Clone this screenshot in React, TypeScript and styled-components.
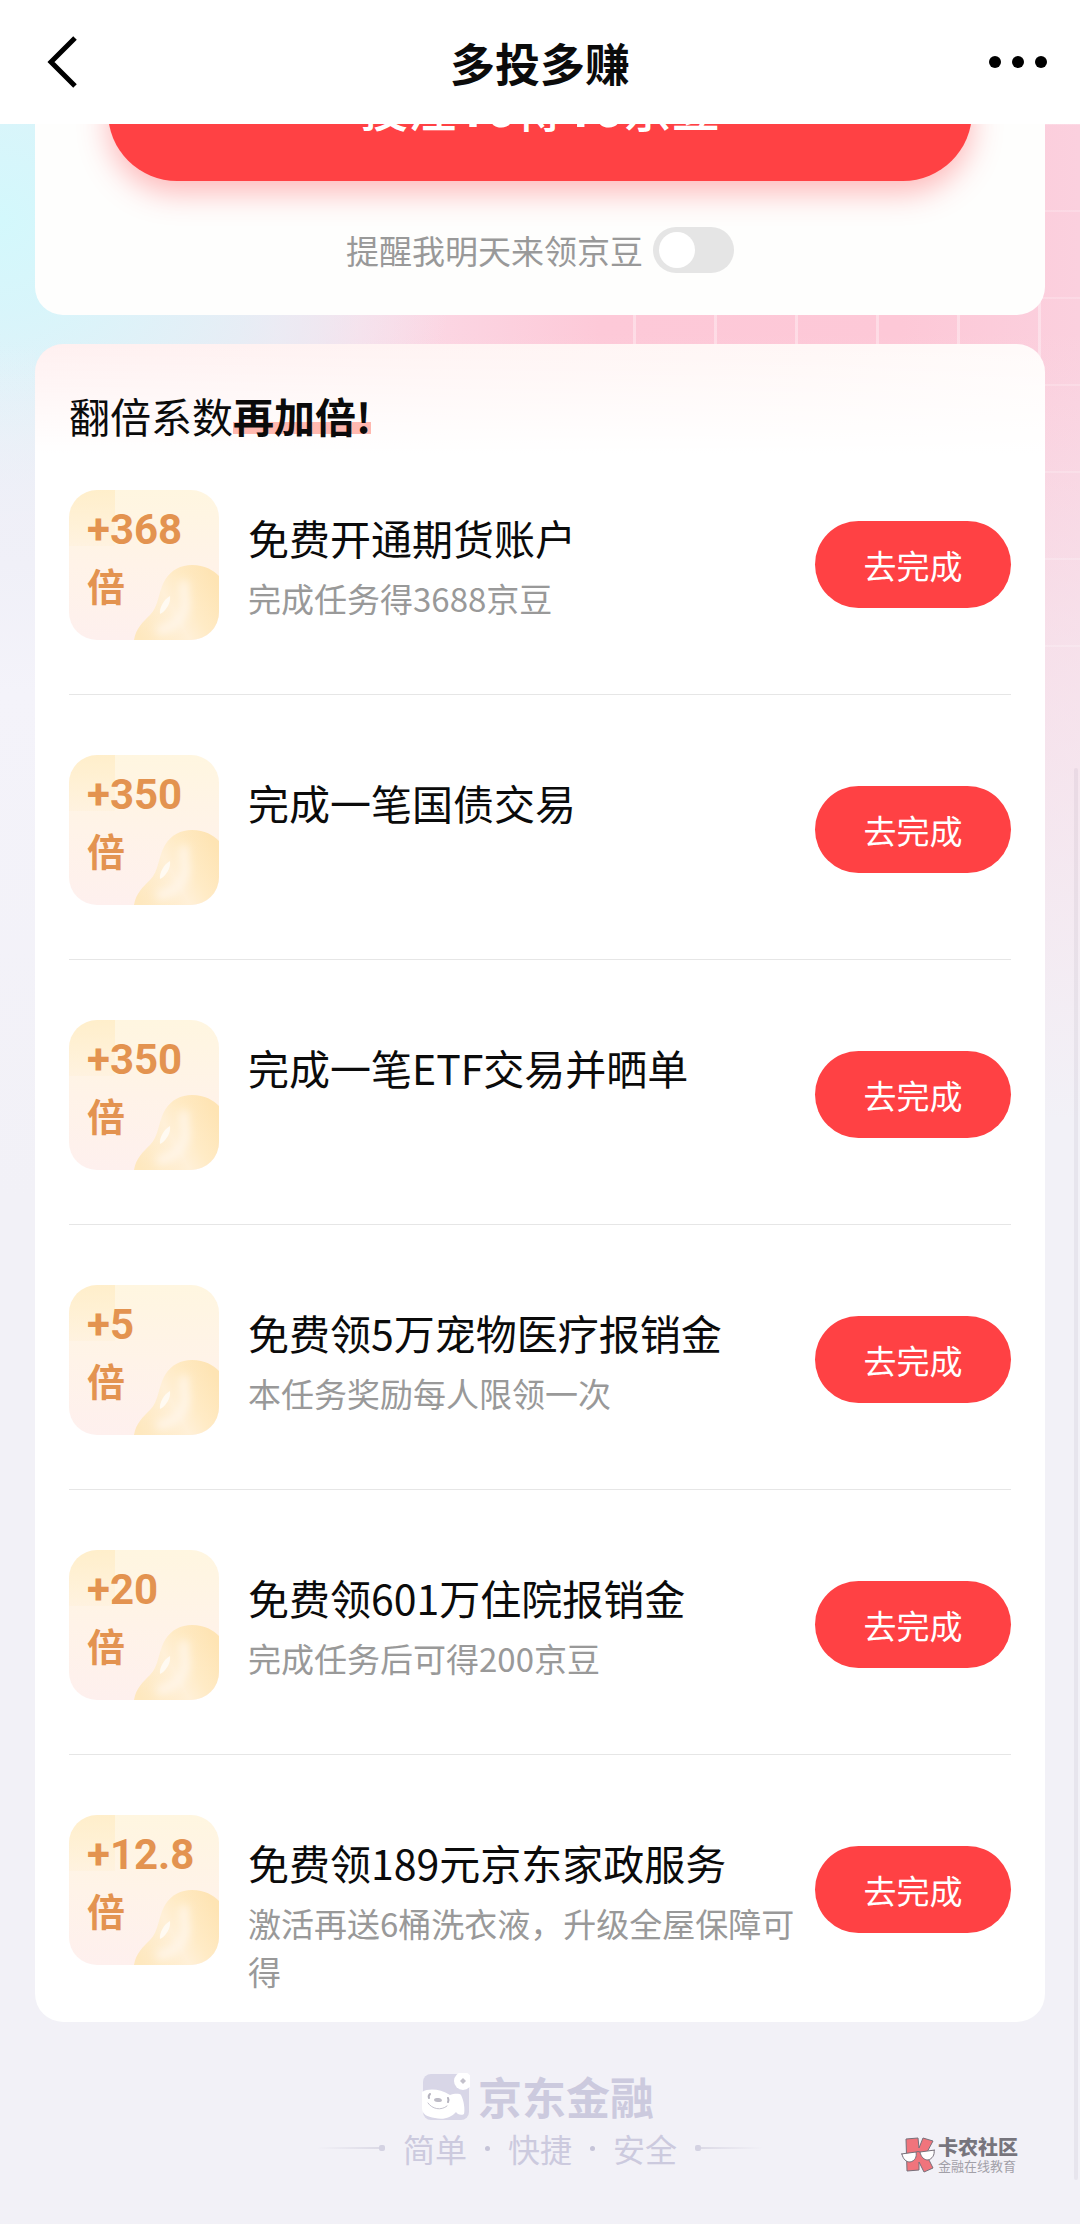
import React from "react";
import styled, { createGlobalStyle } from "styled-components";

const GlobalStyle = createGlobalStyle`
  *, *::before, *::after { box-sizing: border-box; }
  html { scrollbar-width: none; }
  body {
    margin: 0;
    background: #f2f1f7;
    color: #0b0b0b;
    font-family: "Noto Sans CJK SC", "Noto Sans", sans-serif;
  }
  button { font: inherit; border: 0; padding: 0; cursor: pointer; }
  h1, h2, h3, p, ul { margin: 0; padding: 0; font-weight: 400; }
`;

const Page = styled.div`
  position: relative;
  display: flex;
  flex-direction: column;
  min-height: 100vh;
`;

const Backdrop = styled.div`
  position: absolute;
  inset: 0 0 auto 0;
  height: 1200px;
  z-index: -1;
  background:
    linear-gradient(180deg, rgba(242, 241, 247, 0) 330px, rgba(242, 241, 247, 0.5) 640px, #f2f1f7 1120px),
    radial-gradient(ellipse 460px 460px at 0 220px, #d3f8fc 0, rgba(214, 246, 251, 0.9) 20%, rgba(234, 238, 246, 0.7) 65%, rgba(242, 241, 247, 0) 100%),
    linear-gradient(90deg, #e9edf6 0, #e9e6f0 240px, #fbdce8 360px, #fdc9d8 600px, #fdc8d7 900px, #fbd0de 100%);

  &::after {
    content: "";
    position: absolute;
    inset: 0 0 auto auto;
    width: 447px;
    height: 650px;
    background:
      repeating-linear-gradient(90deg, rgba(255, 255, 255, 0.35) 0 3px, transparent 3px 81px),
      repeating-linear-gradient(180deg, transparent 0 36px, rgba(255, 255, 255, 0.2) 36px 38px, transparent 38px 87px);
  }

  &::before {
    content: "";
    position: absolute;
    inset: 344px auto auto 0;
    width: 35px;
    height: 856px;
    background: linear-gradient(180deg, rgba(242, 241, 247, 0) 0, #f0f0f8 220px, #f4f3fa 350px, #f2f1f7 100%);
  }
`;

const Header = styled.header`
  position: sticky;
  top: 0;
  z-index: 2;
  display: grid;
  grid-template-columns: 80px 1fr 80px;
  align-items: center;
  height: 124px;
  padding: 0 24px;
  background: #fff;
`;

const Content = styled.main`
  padding: 0 35px;
  overflow: hidden;
`;

const IconButton = styled.button<{ $end?: boolean }>`
  display: flex;
  justify-content: ${(p) => (p.$end ? "flex-end" : "flex-start")};
  align-items: center;
  height: 80px;
  background: none;
  color: #000;
`;

const PageTitle = styled.h1`
  padding-top: 2px;
  text-align: center;
  font-size: 45px;
  line-height: 64px;
  font-weight: 700;
`;

const BetCard = styled.section`
  display: flex;
  flex-direction: column;
  gap: 46px;
  margin-top: -81px;
  padding: 0 73px 42px;
  border-radius: 0 0 28px 28px;
  background: #fefefd;
`;

const BetButton = styled.button`
  height: 138px;
  padding-bottom: 8px;
  border-radius: 69px;
  background: #ff4144;
  color: #fff;
  font-size: 48px;
  line-height: 72px;
  font-weight: 500;
  box-shadow: 0 12px 30px rgba(255, 65, 68, 0.36);
`;

const BetAmount = styled.span`
  font-family: Roboto, "Noto Sans", sans-serif;
  font-size: 52px;
  font-weight: 700;
`;

const Reminder = styled.label`
  display: flex;
  justify-content: center;
  align-items: center;
  gap: 10px;
  height: 46px;
  color: #999;
  font-size: 33px;
  line-height: 46px;
`;

const Toggle = styled.input`
  appearance: none;
  display: flex;
  align-items: center;
  width: 81px;
  height: 46px;
  margin: 0;
  padding: 0 6px;
  border-radius: 23px;
  background: #e5e5e5;
  cursor: pointer;

  &::before {
    content: "";
    width: 36px;
    height: 36px;
    border-radius: 50%;
    background: #fff;
  }

  &:checked {
    justify-content: flex-end;
    background: #ff4144;
  }
`;

const TaskCard = styled.section`
  margin-top: 29px;
  padding: 42px 34px 27px;
  border-radius: 28px;
  background:
    linear-gradient(180deg, rgba(255, 255, 255, 0) 0, #fff 110px),
    linear-gradient(100deg, #fff0f0 0, #fff7f6 60%, #fff 100%);
`;

const TaskHeading = styled.h2`
  font-size: 41px;
  line-height: 58px;
`;

const Marked = styled.strong`
  font-weight: 700;
  background: linear-gradient(rgba(255, 90, 70, 0.42), rgba(255, 90, 70, 0.42)) no-repeat 0 37px / 100% 12px;
`;

const TaskList = styled.ul`
  display: flex;
  flex-direction: column;
  gap: 60px;
  margin-top: 46px;
  list-style: none;
`;

const TaskRow = styled.li`
  display: flex;
  align-items: flex-start;

  &:not(:last-child) {
    padding-bottom: 54px;
    border-bottom: 1px solid #e6e6e6;
  }
`;

const Badge = styled.div`
  position: relative;
  flex: none;
  width: 150px;
  height: 150px;
  padding: 12px 18px;
  overflow: hidden;
  border-radius: 28px;
  background:
    linear-gradient(180deg, rgba(255, 236, 196, 0.75), rgba(255, 240, 214, 0.4)) no-repeat 0 0 / 46px 56px,
    linear-gradient(180deg, #fff6e0 0, #fff3e8 50%, #fef0ee 100%);
  color: #e39350;
  font-size: 38px;
  line-height: 55px;
  font-weight: 700;
`;

const BadgeNumber = styled.div`
  position: relative;
  font-family: Roboto, "Noto Sans", sans-serif;
  font-size: 42px;
`;

const BeanArt = styled.svg`
  position: absolute;
  right: 0;
  bottom: 0;
`;

const TaskText = styled.div`
  flex: 1;
  min-width: 0;
  display: flex;
  flex-direction: column;
  gap: 9px;
  padding: 19px 16px 0 29px;
`;

const TaskTitle = styled.h3`
  font-size: 41px;
  line-height: 56px;
`;

const TaskNote = styled.p`
  color: #999;
  font-size: 33px;
  line-height: 48px;
`;

const GoButton = styled.button`
  flex: none;
  width: 196px;
  height: 87px;
  margin-top: 31px;
  border-radius: 44px;
  background: #ff4144;
  color: #fff;
  font-size: 33px;
  line-height: 48px;
`;

const Footer = styled.footer`
  display: flex;
  flex-direction: column;
  align-items: center;
  gap: 8px;
  padding: 51px 0 56px;
  color: #cccade;
`;

const Brand = styled.div`
  display: flex;
  align-items: center;
  gap: 8px;
  height: 47px;
  padding-right: 4px;
  font-size: 44px;
  line-height: 47px;
  font-weight: 700;
`;

const Slogan = styled.div`
  display: flex;
  align-items: center;
  gap: 18px;
  font-size: 32px;
  line-height: 40px;
`;

const Dot = styled.i`
  width: 5px;
  height: 5px;
  border-radius: 50%;
  background: #c6c4d8;
`;

const Whisker = styled.span<{ $flip?: boolean }>`
  display: flex;
  flex-direction: ${(p) => (p.$flip ? "row-reverse" : "row")};
  align-items: center;

  &::before {
    content: "";
    width: 62px;
    height: 2px;
    background: linear-gradient(${(p) => (p.$flip ? "270deg" : "90deg")}, rgba(216, 214, 228, 0), #dcdae6);
  }

  &::after {
    content: "";
    width: 6px;
    height: 6px;
    border-radius: 2px;
    background: #d4d2e2;
  }
`;

const Watermark = styled.aside`
  position: absolute;
  right: 62px;
  bottom: 50px;
  display: flex;
  align-items: center;
  gap: 3px;
`;

const WatermarkName = styled.div`
  color: #77757d;
  font-size: 20px;
  line-height: 22px;
  font-weight: 900;
`;

const WatermarkNote = styled.div`
  color: #a2a0a8;
  font-size: 13px;
  line-height: 16px;
`;

const ScrollThumb = styled.div`
  position: absolute;
  top: 768px;
  right: 2px;
  bottom: 44px;
  width: 4px;
  border-radius: 2px;
  background: rgba(60, 50, 90, 0.06);
`;

interface Task {
  times: string;
  title: string;
  note?: string;
}

const tasks: Task[] = [
  { times: "+368", title: "免费开通期货账户", note: "完成任务得3688京豆" },
  { times: "+350", title: "完成一笔国债交易" },
  { times: "+350", title: "完成一笔ETF交易并晒单" },
  { times: "+5", title: "免费领5万宠物医疗报销金", note: "本任务奖励每人限领一次" },
  { times: "+20", title: "免费领601万住院报销金", note: "完成任务后可得200京豆" },
  { times: "+12.8", title: "免费领189元京东家政服务", note: "激活再送6桶洗衣液，升级全屋保障可得" },
];

function Bean({ id }: { id: string }) {
  return (
    <BeanArt width="86" height="76" viewBox="0 0 86 76" aria-hidden="true">
      <defs>
        <linearGradient id={`${id}-body`} x1="0" y1="0.8" x2="1" y2="0.3">
          <stop offset="0" stopColor="#fee8bf" />
          <stop offset="0.45" stopColor="#fff0d8" />
          <stop offset="0.65" stopColor="#ffebc6" />
          <stop offset="1" stopColor="#fee4b4" />
        </linearGradient>
        <filter id={`${id}-soft`} x="-50%" y="-50%" width="200%" height="200%">
          <feGaussianBlur stdDeviation="4" />
        </filter>
      </defs>
      <path
        d="M1 76C3 64 10 58 17 51C26 42 25 28 32 16C38 6 48 1 59 1C72 1 80 6 86 12V76Z"
        fill={`url(#${id}-body)`}
      />
      <path d="M52 17C47 30 57 37 49 51C44 62 32 65 24 67" fill="none" stroke="#fff5e8" strokeWidth="9" filter={`url(#${id}-soft)`} />
      <path d="M37 32C31 35 26 44 27 50C33 47 38 39 37 32Z" fill="#fffaf2" />
    </BeanArt>
  );
}

function Mascot() {
  return (
    <svg width="48" height="48" viewBox="0 0 48 48" aria-hidden="true">
      <rect x="1" y="1" width="46" height="46" rx="8" fill="#d8d6e7" />
      <path d="M0 19C7 15 18 16 28 22C31 21 37 20 39 22C42 28 43 36 42 41C39 43 35 41 34 39C29 45 21 47 13 45C5 44 0 41 0 35Z" fill="#fff" />
      <circle cx="41" cy="8" r="9" fill="#fff" />
      <path d="M41 5L44 8L41 11L38 8Z" fill="#c3c1cb" />
      <ellipse cx="16" cy="27" rx="4" ry="2" transform="rotate(8 16 27)" fill="#bdbbc6" />
      <path d="M8 21Q6 23 7 25M26 25Q27 27 26 29" fill="none" stroke="#b4b2be" strokeWidth="2" strokeLinecap="round" />
      <path d="M6 30C10 36 19 38 25 33" fill="none" stroke="#c4c2ce" strokeWidth="1" strokeLinecap="round" />
    </svg>
  );
}

function WatermarkLogo() {
  return (
    <svg width="34" height="36" viewBox="0 0 34 36" aria-hidden="true">
      <path
        d="M5 2L17 1L18 11L22 1L32 4L25 17L32 31L23 35L18 25V33L6 34Z"
        fill="#f0747c"
        stroke="#77707a"
        strokeWidth="1"
        strokeLinejoin="round"
      />
      <path d="M1 17L15 15C16 20 14 24 9 25C5 25 2 22 1 17ZM19 15L33 13C34 18 31 22 27 23C23 23 20 20 19 15Z" fill="#fff" />
      <path
        d="M0 17L15 15Q17 14 19 15L34 13M1 17C2 22 5 25 9 25C14 24 16 20 15 15M19 15C20 20 23 23 27 23C31 22 34 18 33 13"
        fill="none"
        stroke="#77707a"
        strokeWidth="1"
      />
    </svg>
  );
}

export default function App() {
  return (
    <>
      <GlobalStyle />
      <Page>
        <Backdrop />
        <Header>
          <IconButton type="button" aria-label="返回">
            <svg width="56" height="56" viewBox="0 0 56 56" fill="none" stroke="currentColor" strokeWidth="5">
              <path d="M51 4L27 28L51 52" />
            </svg>
          </IconButton>
          <PageTitle>多投多赚</PageTitle>
          <IconButton type="button" aria-label="更多" $end>
            <svg width="72" height="16" viewBox="0 0 72 16" fill="currentColor">
              <circle cx="11" cy="8" r="6" />
              <circle cx="34" cy="8" r="6" />
              <circle cx="57" cy="8" r="6" />
            </svg>
          </IconButton>
        </Header>

        <Content>
          <BetCard>
            <BetButton type="button">
              投注<BetAmount>10</BetAmount>得<BetAmount>10</BetAmount>京豆
            </BetButton>
            <Reminder>
              提醒我明天来领京豆
              <Toggle type="checkbox" role="switch" />
            </Reminder>
          </BetCard>

          <TaskCard>
            <TaskHeading>
              翻倍系数<Marked>再加倍!</Marked>
            </TaskHeading>
            <TaskList>
              {tasks.map((task, i) => (
                <TaskRow key={task.title}>
                  <Badge>
                    <Bean id={`bean${i}`} />
                    <BadgeNumber>{task.times}</BadgeNumber>
                    倍
                  </Badge>
                  <TaskText>
                    <TaskTitle>{task.title}</TaskTitle>
                    {task.note && <TaskNote>{task.note}</TaskNote>}
                  </TaskText>
                  <GoButton type="button">去完成</GoButton>
                </TaskRow>
              ))}
            </TaskList>
          </TaskCard>
        </Content>

        <Footer>
          <Brand>
            <Mascot />
            京东金融
          </Brand>
          <Slogan>
            <Whisker />
            <span>简单</span>
            <Dot />
            <span>快捷</span>
            <Dot />
            <span>安全</span>
            <Whisker $flip />
          </Slogan>
        </Footer>

        <Watermark>
          <WatermarkLogo />
          <div>
            <WatermarkName>卡农社区</WatermarkName>
            <WatermarkNote>金融在线教育</WatermarkNote>
          </div>
        </Watermark>
        <ScrollThumb />
      </Page>
    </>
  );
}
